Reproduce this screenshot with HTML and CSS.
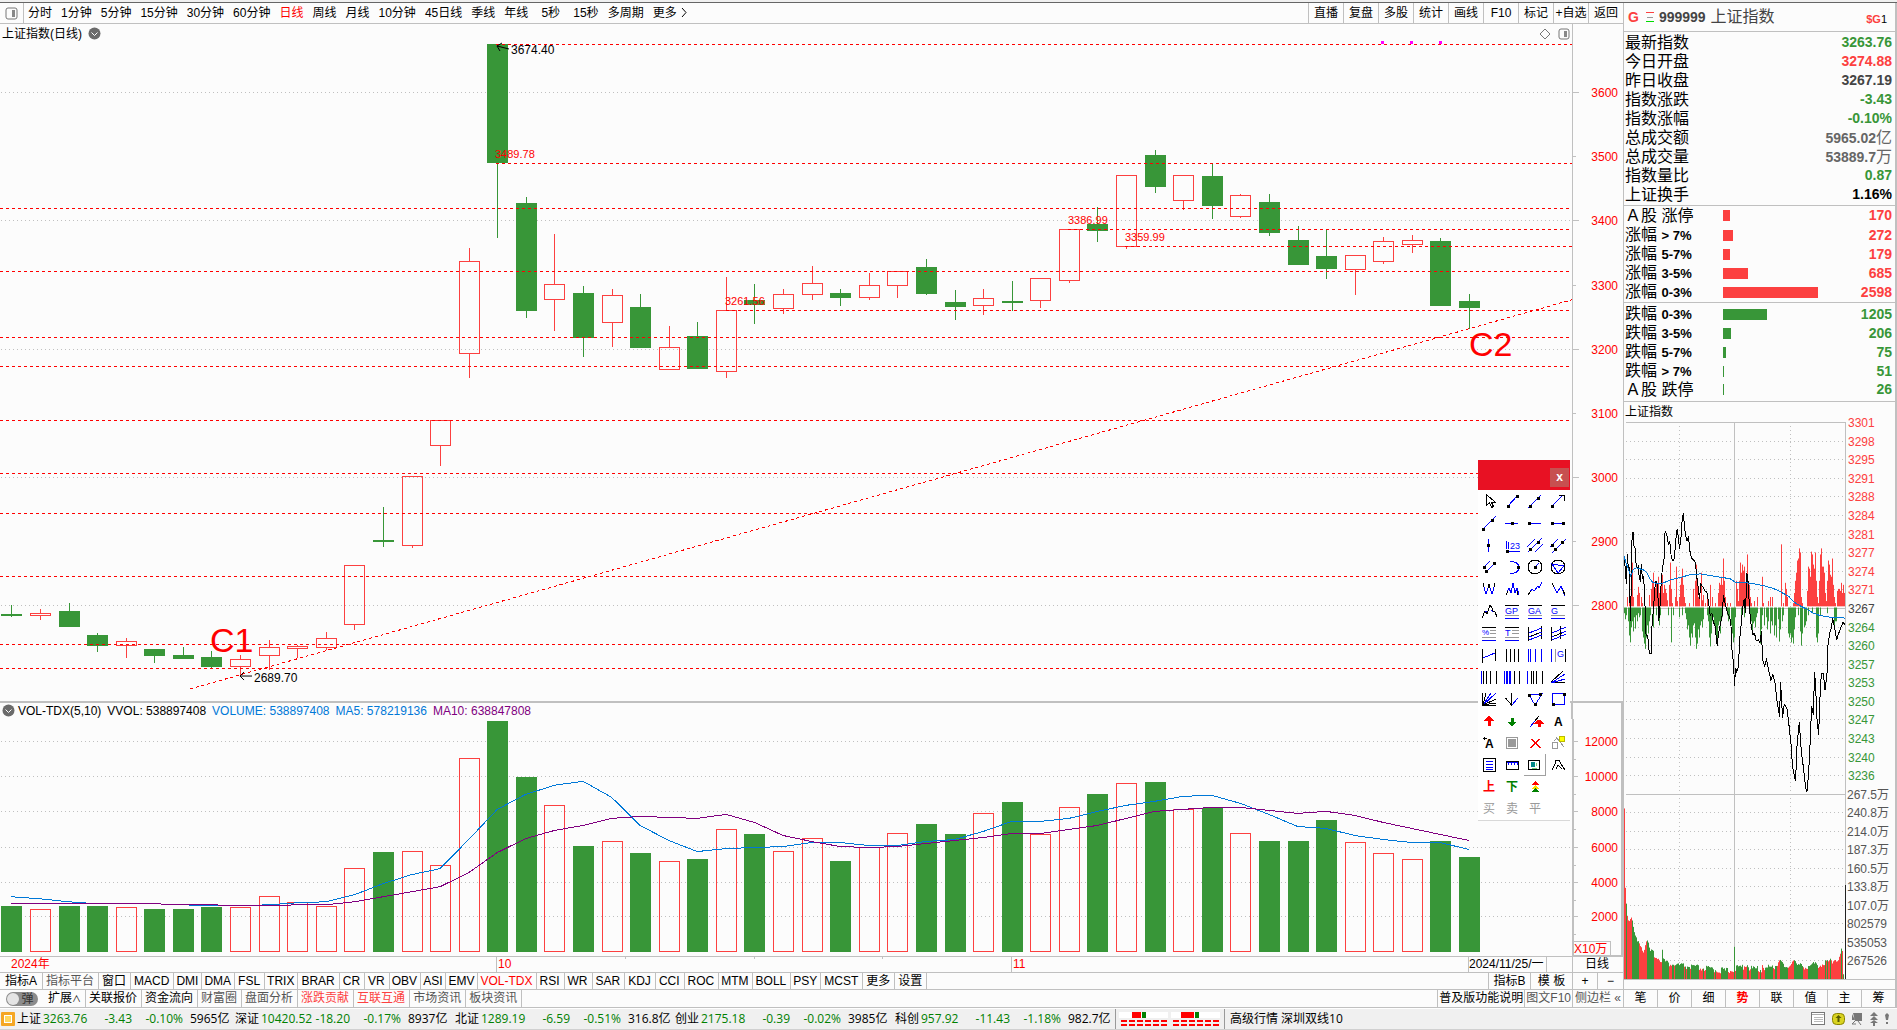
FILE: index.html
```html
<!DOCTYPE html>
<html lang="zh-CN">
<head>
<meta charset="utf-8">
<title>上证指数 日线</title>
<link rel="stylesheet" href="styles.css">
</head>
<body>
<div class="app">
  <div class="workspace">
    <main class="left">
      <nav class="toolbar">
        <button class="tool-icon" aria-label="侧栏"><svg width="13" height="13"><rect x="1" y="1" width="11" height="11" rx="2" fill="none" stroke="#777" stroke-width="1"/><rect x="7" y="3" width="3" height="7" fill="#888"/></svg></button>
        <div class="periods">
          <button>分时</button><button>1分钟</button><button>5分钟</button><button>15分钟</button><button>30分钟</button><button>60分钟</button><button class="active">日线</button><button>周线</button><button>月线</button><button>10分钟</button><button>45日线</button><button>季线</button><button>年线</button><button class="short">5秒</button><button>15秒</button><button>多周期</button><button>更多<svg class="more" width="6" height="11"><path d="M1 1l4 4.500l-4 4.500" fill="none" stroke="#000"/></svg></button>
        </div>
        <div class="actions">
          <button>直播</button><button>复盘</button><button>多股</button><button>统计</button><button>画线</button><button>F10</button><button>标记</button><button>+自选</button><button>返回</button>
        </div>
      </nav>

      <section class="pane price-pane">
        <header class="pane-head">
          <div class="pane-title">
            <span>上证指数(日线)</span>
            <svg class="chev" width="13" height="13"><circle cx="6.500" cy="6.500" r="6" fill="#6b6b6b"/><path d="M3.500 5.500l3 3l3-3" fill="none" stroke="#fff"/></svg>
            <span class="head-icons">
              <svg width="12" height="12"><path d="M6 1l5 5l-5 5l-5-5z" fill="none" stroke="#777"/></svg>
              <svg width="12" height="12"><rect x="1" y="1" width="10" height="10" rx="2" fill="none" stroke="#777" stroke-width="1"/><rect x="6" y="3" width="3" height="6" fill="#888"/></svg>
            </span>
          </div>
        </header>
        <svg id="price" class="plot"></svg>
      </section>

      <section class="pane volume-pane">
        <header class="pane-head">
          <div class="pane-title">
            <svg class="chev" width="13" height="13"><circle cx="6.500" cy="6.500" r="6" fill="#6b6b6b"/><path d="M3.500 5.500l3 3l3-3" fill="none" stroke="#fff"/></svg>
            <span>VOL-TDX(5,10)</span><span>VVOL: 538897408</span><span class="blue">VOLUME: 538897408</span><span class="blue">MA5: 578219136</span><span class="purple">MA10: 638847808</span>
          </div>
        </header>
        <svg id="volume" class="plot"></svg>
      </section>

      <nav class="bar indicators">
        <button class="wide">指标A</button><button class="muted">指标平台</button><button>窗口</button><button>MACD</button><button class="tight">DMI</button><button class="tight">DMA</button><button>FSL</button><button class="tight">TRIX</button><button>BRAR</button><button>CR</button><button>VR</button><button class="tight">OBV</button><button class="tight">ASI</button><button class="tight">EMV</button><button class="tight active">VOL-TDX</button><button>RSI</button><button>WR</button><button>SAR</button><button>KDJ</button><button>CCI</button><button>ROC</button><button class="tight">MTM</button><button>BOLL</button><button class="tight">PSY</button><button>MCST</button><button>更多</button><button>设置</button>
        <div class="bar-end"><button class="mid">指标B</button><button class="mid">模 板</button><button class="half">+</button><button class="half">−</button></div>
      </nav>
      <nav class="bar extras">
        <span class="switch-cell"><button class="switch"><i></i>弹</button></span>
        <button>扩展<small>∧</small></button><button>关联报价</button><button>资金流向</button><button class="muted">财富圈</button><button class="muted">盘面分析</button><button class="hot">涨跌贡献</button><button class="hot">互联互通</button><button class="muted">市场资讯</button><button class="muted last">板块资讯</button>
        <div class="bar-end"><button class="note">普及版功能说明</button><button class="note muted">图文F10</button><button class="side-toggle muted">侧边栏 «</button></div>
      </nav>

      <div class="palette" role="toolbar" aria-label="画线工具">
        <div class="palette-head"><button aria-label="关闭">x</button></div>
        <div class="palette-grid" id="tools"></div>
      </div>
    </main>

    <aside class="right">
      <header class="quote-head">
        <b class="red">G</b>
        <svg width="8" height="12"><path d="M0 1.500h8" stroke="#fc4040"/><path d="M1 6.500h6" stroke="#999"/><path d="M0 10.500h8" stroke="#0d0" stroke-width="1"/></svg>
        <b class="code">999999</b><span class="name">上证指数</span><span class="tag"><b>$G</b>1</span>
      </header>
      <dl class="quotes">
        <div><dt>最新指数</dt><dd class="green">3263.76</dd></div>
        <div><dt>今日开盘</dt><dd class="red">3274.88</dd></div>
        <div><dt>昨日收盘</dt><dd class="dark">3267.19</dd></div>
        <div><dt>指数涨跌</dt><dd class="green">-3.43</dd></div>
        <div><dt>指数涨幅</dt><dd class="green">-0.10%</dd></div>
        <div><dt>总成交额</dt><dd class="grey">5965.02<span>亿</span></dd></div>
        <div><dt>总成交量</dt><dd class="grey">53889.7<span>万</span></dd></div>
        <div><dt>指数量比</dt><dd class="green">0.87</dd></div>
        <div><dt>上证换手</dt><dd>1.16%</dd></div>
      </dl>
      <dl class="breadth up">
        <div><dt>Ａ股 涨停</dt><dd class="track"><i style="width:7px"></i></dd><dd>170</dd></div>
        <div><dt>涨幅 <b>&gt; 7%</b></dt><dd class="track"><i style="width:10px"></i></dd><dd>272</dd></div>
        <div><dt>涨幅 <b>5-7%</b></dt><dd class="track"><i style="width:7px"></i></dd><dd>179</dd></div>
        <div><dt>涨幅 <b>3-5%</b></dt><dd class="track"><i style="width:25px"></i></dd><dd>685</dd></div>
        <div><dt>涨幅 <b>0-3%</b></dt><dd class="track"><i style="width:95px"></i></dd><dd>2598</dd></div>
      </dl>
      <dl class="breadth down">
        <div><dt>跌幅 <b>0-3%</b></dt><dd class="track"><i style="width:44px"></i></dd><dd>1205</dd></div>
        <div><dt>跌幅 <b>3-5%</b></dt><dd class="track"><i style="width:8px"></i></dd><dd>206</dd></div>
        <div><dt>跌幅 <b>5-7%</b></dt><dd class="track"><i style="width:3px"></i></dd><dd>75</dd></div>
        <div><dt>跌幅 <b>&gt; 7%</b></dt><dd class="track"><i style="width:1px"></i></dd><dd>51</dd></div>
        <div><dt>Ａ股 跌停</dt><dd class="track"><i style="width:1px"></i></dd><dd>26</dd></div>
      </dl>
      <div class="mini-title">上证指数</div>
      <svg id="mini" class="plot"></svg>
      <nav class="mini-tabs">
        <button>笔</button><button>价</button><button>细</button><button class="active">势</button><button>联</button><button>值</button><button>主</button><button>筹</button>
      </nav>
    </aside>
  </div>

  <footer class="status">
    <svg class="logo" width="14" height="14"><rect x="0" y="0" width="14" height="14" rx="1" fill="#f5a623"/><rect x="3.500" y="3.500" width="7" height="7" fill="#ffd75e" stroke="#fff"/></svg>
    <div class="ticker"><span>上证</span><em>3263.76</em><em class="r">-3.43</em><em class="r">-0.10%</em><span class="amt">5965亿</span></div>
    <div class="ticker"><span>深证</span><em>10420.52</em><em class="r">-18.20</em><em class="r">-0.17%</em><span class="amt">8937亿</span></div>
    <div class="ticker"><span>北证</span><em>1289.19</em><em class="r">-6.59</em><em class="r">-0.51%</em><span class="amt">316.8亿</span></div>
    <div class="ticker"><span>创业</span><em>2175.18</em><em class="r">-0.39</em><em class="r">-0.02%</em><span class="amt">3985亿</span></div>
    <div class="ticker"><span>科创</span><em>957.92</em><em class="r">-11.43</em><em class="r">-1.18%</em><span class="amt">982.7亿</span></div>
    <div class="meter"><svg id="meter" width="104" height="16"></svg></div>
    <span class="feed">高级行情 深圳双线10</span>
    <span class="tray">
      <svg width="15" height="14"><rect x=".5" y=".5" width="13" height="12" fill="#fff" stroke="#777"/><path d="M1 2.500h12" stroke="#aaa"/><path d="M3 5.500h9M3 7.500h9M3 9.500h9" stroke="#bbb"/></svg>
      <svg width="13" height="14"><rect x=".5" y="1.500" width="12" height="11" rx="4" fill="#d9d320" stroke="#8a8400"/><path d="M6.500 3l3 3h-2v4h-2v-4h-2z" fill="#555a00"/></svg>
      <svg width="12" height="14"><path d="M2 1h9v8h-7zM1 2v6h3" fill="#777"/><path d="M4 9l-3 3h4M7 9l3 4" stroke="#777" fill="none"/></svg>
      <svg width="10" height="14"><path d="M5 0l4 4h-8zM5 4l4 4h-8zM5 8l4 3h-8zM4 11h2v3h-2z" fill="#777"/></svg>
      <svg width="4" height="14"><path d="M2 1l2 2l-1 5h-2l-1-5zM1 10h2v2h-2z" fill="#777"/></svg>
    </span>
  </footer>
</div>
<script src="script.js"></script>
</body>
</html>
```
FILE: styles.css
```css
* { box-sizing: border-box; }
body {
  margin: 0;
  background: #fcfcfc;
  color: #000;
  font: 12px/16px "Liberation Sans", "Noto Sans CJK SC", sans-serif;
}
button {
  margin: 0;
  padding: 0;
  border: 0;
  background: none;
  color: inherit;
  font: inherit;
  white-space: nowrap;
}
svg { display: block; flex: none; }
dl, dd { margin: 0; }
em, i { font-style: normal; }

.app {
  display: flex;
  flex-direction: column;
  height: 100vh;
  min-height: 760px;
  border-top: 2px solid #f0f0f0;
}
.workspace {
  flex: 1;
  min-height: 0;
  display: grid;
  grid-template-columns: minmax(0, 1fr) 274px;
  border-top: 1px solid #666;
}
.left {
  position: relative;
  display: flex;
  flex-direction: column;
  min-width: 0;
  min-height: 0;
}

/* Period toolbar */
.toolbar {
  display: flex;
  height: 21px;
  border-bottom: 1px solid #c0c0c0;
}
.tool-icon {
  display: flex;
  align-items: center;
  width: 24px;
  padding-left: 5px;
  border-right: 1px solid #c0c0c0;
}
.periods { display: flex; }
.periods button { padding: 0 5px 0 4px; }
.periods .short { min-width: 36px; }
.periods .active { color: #f00; }
.more { display: inline-block; margin-left: 4px; vertical-align: -1px; }
.actions { display: flex; margin-left: auto; }
.actions button { width: 35px; border-left: 1px solid #c0c0c0; }

/* Chart panes */
.pane { display: flex; flex-direction: column; min-height: 0; }
.price-pane { flex: 678 1 0; }
.volume-pane { flex: 270 1 0; border-top: 1px solid #c0c0c0; }
.pane-head { display: flex; height: 19px; padding-right: 50px; }
.pane-title {
  flex: 1;
  display: flex;
  align-items: center;
  gap: 6px;
  padding-left: 2px;
  border-right: 1px solid #c0c0c0;
}
.head-icons { display: flex; gap: 7px; margin-left: auto; padding-right: 2px; }
.volume-pane .pane-head { height: 17px; box-shadow: inset -2px 1px #c0c0c0; }
.volume-pane .pane-title { border-right: 2px solid #c0c0c0; }
.volume-pane .chev { margin-right: -3px; }
.plot { flex: 1; width: 100%; min-height: 0; overflow: visible; }
.blue { color: #0078d7; }
.purple { color: #800080; }

/* Tab rows below the charts */
.bar { display: flex; height: 17px; border-top: 1px solid #c0c0c0; }
.bar button { padding: 0 4px 0 3px; border-right: 1px solid #c0c0c0; line-height: 15px; }
.bar .tight { padding: 0 3px 0 2px; }
.bar .active { color: #f00; }
.bar .muted { color: #555; }
.bar .hot { color: #fc4040; }
.bar .wide { padding: 0 5px; }
.bar-end { display: flex; margin-left: auto; border-left: 1px solid #c0c0c0; }
.bar-end .mid { width: 42px; padding: 0; }
.bar-end .half { width: 25px; padding: 0; }
.bar-end .half:last-child, .bar-end .side-toggle { border-right: 0; }
.bar-end .note { padding: 0 1px; }
.bar-end .side-toggle { width: 50px; padding: 0; }
.extras { height: 19px; border-bottom: 1px solid #c0c0c0; }
.extras button { line-height: 17px; }
.extras small { font-size: 9px; }
.switch-cell { display: flex; align-items: center; width: 45px; padding-left: 6px; }
.extras .switch {
  position: relative;
  width: 32px;
  height: 14px;
  padding: 0 4px 0 15px;
  border: 0;
  border-radius: 7px;
  background: #8c8c8c;
  color: #333;
  line-height: 14px;
}
.switch i {
  position: absolute;
  left: 1px;
  top: 1px;
  width: 12px;
  height: 12px;
  border-radius: 6px;
  background: #e4e4e4;
}

/* Floating drawing tools */
.palette {
  position: absolute;
  right: 53px;
  top: 457px;
  width: 92px;
  background: #fff;
  border-bottom: 1px solid #d8d8d8;
}
.palette-head {
  display: flex;
  justify-content: flex-end;
  height: 30px;
  padding: 8px 1px 0 0;
  background: #e81123;
}
.palette-head button {
  width: 19px;
  height: 19px;
  background: #c75050;
  color: #fff;
  font-weight: bold;
  line-height: 17px;
}
.palette-grid { display: grid; grid-template-columns: repeat(4, 1fr); padding-right: 1px; }
.palette-grid svg { shape-rendering: crispEdges; }
.palette-grid button { display: flex; justify-content: center; align-items: center; height: 22px; }
.palette-grid .raised { border: solid #a0a0a0; border-width: 0 1px 1px 0; }

/* Quote panel */
.right {
  display: flex;
  flex-direction: column;
  min-height: 0;
  border-left: 1px solid #c0c0c0;
  border-right: 2px solid #c0c0c0;
}
.quote-head {
  display: flex;
  align-items: center;
  gap: 5px;
  height: 29px;
  padding: 0 8px 0 4px;
  border-bottom: 1px solid #c0c0c0;
  font-size: 14px;
  line-height: 20px;
}
.quote-head svg { margin-left: 2px; }
.quote-head .code { color: #444; }
.quote-head .name { color: #444; font-size: 16px; }
.quote-head .tag { margin-left: auto; padding-top: 3px; font-size: 11px; }
.tag b { color: #fc4040; }
.red { color: #fc4040; }
.green { color: #389638; }
.dark { color: #444; }
.grey { color: #666; }
.quotes, .breadth { padding: 1px 3px 1px 1px; border-bottom: 1px solid #c0c0c0; }
.quotes div { display: flex; justify-content: space-between; }
.quotes div, .breadth div { height: 19px; line-height: 19px; }
.quotes dt, .breadth dt { font-size: 16px; white-space: nowrap; }
.quotes dd { font-size: 14px; font-weight: bold; }
.quotes dd span { font-size: 16px; font-weight: normal; }
.breadth.up { padding-top: 0; }
.breadth.down { padding-bottom: 2px; }
.breadth div { display: grid; grid-template-columns: 98px 1fr auto; align-items: center; }
.breadth dt b { font-size: 13px; }
.breadth dd { font-size: 14px; font-weight: bold; }
.track i { display: block; height: 11px; background: currentColor; }
.up dd { color: #fc4040; }
.down dd { color: #389638; }
.mini-title { height: 20px; padding: 2px 0 0 1px; }
.mini-tabs { display: flex; height: 19px; border: solid #c0c0c0; border-width: 1px 0; }
.mini-tabs button { flex: 1; border-left: 1px solid #c0c0c0; line-height: 17px; }
.mini-tabs button:first-child { border-left: 0; }
.mini-tabs .active { color: #f00; font-weight: bold; }

/* Status line */
.status {
  display: flex;
  align-items: center;
  height: 22px;
  padding: 0 8px 0 1px;
  background: #f0f0f0;
  border-top: 1px solid #fff;
  border-bottom: 1px solid #d0d0d0;
  font-family: "Open Sans", "Noto Sans CJK SC", sans-serif;
  white-space: nowrap;
}
.ticker { display: grid; grid-template-columns: 26px 50px 39px 51px 54px; }
.ticker:first-of-type { margin-left: 2px; grid-template-columns: 26px 50px 39px 51px 52px; }
.ticker em { color: #008000; }
.ticker .r { text-align: right; }
.ticker .amt { padding-left: 7px; }
.meter { padding: 2px; border: solid #999; border-width: 0 1px; }
.feed { padding-left: 5px; }
.tray { display: flex; gap: 6px; margin-left: auto; }
```
FILE: script.js
```js
const NS = 'http://www.w3.org/2000/svg';
const RED = '#fc4040', GREEN = '#389638', GRID = '#c0c0c0', SIGNAL = '#f00';

function el(parent, name, attrs, text) {
  const n = document.createElementNS(NS, name);
  for (const k in attrs) n.setAttribute(k, attrs[k]);
  if (text !== undefined) n.textContent = text;
  parent.appendChild(n);
  return n;
}
const crisp = v => Math.round(v) + 0.5;
function line(s, x1, y1, x2, y2, stroke, dash, width) {
  el(s, 'line', { x1, y1, x2, y2, stroke, 'stroke-dasharray': dash || 'none', 'stroke-width': width || 1, 'shape-rendering': 'crispEdges' });
}
function rect(s, x, y, w, h, fill, stroke) {
  el(s, 'rect', { x, y, width: w, height: h, fill, stroke: stroke || 'none' });
}
function text(s, x, y, t, fill, size, anchor) {
  el(s, 'text', { x, y, fill, 'font-size': size || 12, 'text-anchor': anchor || 'start' }, t);
}
function curve(s, points, stroke) {
  el(s, 'polyline', { points: points.map(q => q.join(',')).join(' '), fill: 'none', stroke, 'shape-rendering': 'crispEdges' });
}

// high, body top, body bottom, low, volume top, rising
const days = [
  [606,615,617,618,906,0],[610,614,617,621,909,1],[604,612,628,628,906,0],[634,636,647,653,906,0],
  [639,642,647,659,907,1],[650,650,657,664,909,0],[648,656,660,660,909,0],[652,658,668,669,907,0],
  [656,660,668,677,907,1],[641,648,657,671,896,1],[646,647,650,659,902,1],[633,639,649,651,906,1],
  [566,566,626,631,868,1],[508,541,543,548,852,0],[477,477,547,549,851,1],[421,421,447,467,865,1],
  [248,261,354,379,759,1],[44,44,163,238,722,0],[197,203,311,318,778,0],[234,284,300,331,806,1],
  [286,293,338,357,846,0],[289,295,323,347,841,1],[294,307,348,348,853,0],[326,347,370,370,861,1],
  [322,336,369,369,859,0],[277,310,372,379,830,1],[284,300,305,324,835,0],[289,294,309,314,851,1],
  [266,283,295,300,838,1],[289,293,298,306,861,0],[273,285,298,300,847,1],[271,271,286,298,834,1],
  [259,267,294,295,825,0],[290,302,307,320,835,0],[289,298,306,315,814,1],[281,301,303,311,803,0],
  [278,278,301,308,835,1],[229,229,281,283,808,1],[207,224,231,242,795,0],[175,175,247,249,784,1],
  [150,155,187,193,783,0],[175,175,201,210,810,1],[163,176,206,219,809,0],[194,195,217,218,834,1],
  [194,202,233,236,841,0],[226,240,265,265,841,0],[229,256,269,279,821,0],[255,255,270,295,842,1],
  [237,241,262,264,853,1],[235,240,245,253,859,1],[238,241,306,306,841,0],[294,301,308,329,857,0]
];
const ma5 = [897,899,902,904,904,904,905,906,906,905,903,902,895,884,875,869,840,810,795,786,782,798,826,841,852,849,848,847,843,843,846,846,842,840,832,822,822,819,812,806,802,797,796,804,815,827,829,836,840,843,843,850];
const ma10 = [904,904,904,904,904,904,905,905,906,906,905,905,902,897,892,887,873,853,839,831,826,819,817,818,819,815,823,836,842,847,848,847,844,841,838,834,834,830,826,819,812,810,808,808,811,814,812,816,823,829,835,841];
const dayX = i => 11.4 + 28.58 * i;

function fit(svg, w, top, h) {
  svg.replaceChildren();
  const W = svg.clientWidth, H = svg.clientHeight;
  return { W, H, x: v => v / w * W, y: v => (v - top) / h * H };
}

function drawPrice() {
  const s = document.getElementById('price');
  const { W, H, x, y } = fit(s, 1623, 43, 659);
  const edge = W - 50.5;
  [[3600,92],[3500,156],[3400,220],[3300,285],[3200,349],[3100,414],[3000,478],[2900,542],[2800,606]].forEach(([p, v], i) => {
    const py = crisp(y(v));
    if (i % 2 === 0) line(s, 1, py, edge, py, GRID, '1 3');
    line(s, edge, py, edge + (i % 2 ? 3 : 6), py, GRID);
    text(s, W - 5, py + 4, p, SIGNAL, 12, 'end');
  });
  days.forEach((d, i) => {
    const c = Math.round(x(dayX(i))), [hi, t, b, lo] = d.map(v => Math.round(y(v)));
    const col = d[5] ? RED : GREEN, h = b - t;
    line(s, c + .5, hi, c + .5, t, col);
    line(s, c + .5, b, c + .5, lo, col);
    if (d[5]) rect(s, c - 9.5, t + .5, 20, h - 1, 'none', col);
    else rect(s, c - 10, t, 21, h, col);
  });
  [[44,496],[163,496],[208,0],[229,1068],[246,1125],[271,0],[310,726],[337,0],[366,0],[421,0],[474,0],[514,0],[577,0],[645,0],[669,0]]
    .forEach(([v, from]) => line(s, Math.round(x(from)), crisp(y(v)), edge, crisp(y(v)), SIGNAL, '3 3'));
  line(s, x(190), y(690), edge, y(300), SIGNAL, '3 3');
  line(s, edge, 0, edge, H, GRID);
  [1382, 1411, 1440].forEach(v => rect(s, Math.round(x(v)) - 1, y(41), 3, 3, '#f0f'));
  text(s, x(511), y(54), '3674.40', '#000');
  text(s, x(254), y(683), '2689.70', '#000');
  el(s, 'path', { d: `M${x(497)} ${y(46)}l12 3m-12-3l5-3m-5 3l3 5M${x(240)} ${y(677)}h12m-12 0l4-4m-4 4l4 4`, stroke: '#000', fill: 'none' });
  [[495,158,'3489.78'],[725,305,'3261.56'],[1068,224,'3386.99'],[1125,241,'3359.99']].forEach(a => text(s, x(a[0]), y(a[1]), a[2], SIGNAL, 11));
  text(s, x(210), y(653), 'C1', SIGNAL, 34);
  text(s, x(1469), y(356), 'C2', SIGNAL, 34);
}

function drawVolume() {
  const s = document.getElementById('volume');
  const { W, H, x } = fit(s, 1623, 720, 252);
  const edge = W - 50, base = H - 16, by = v => (v - 720) / 236 * base;
  [742,777,812,847,882,916].forEach((v, i) => {
    const py = crisp(by(v));
    line(s, 1, py, edge, py, GRID, '1 3');
    line(s, edge, py, edge + 5, py, GRID);
    line(s, edge, py + 18, edge + 3, py + 18, GRID);
    text(s, W - 5, py + 4, 12000 - i * 2000, SIGNAL, 12, 'end');
  });
  const bottom = Math.round(by(952));
  days.forEach((d, i) => {
    const c = Math.round(x(dayX(i))), t = Math.round(by(d[4]));
    if (d[5]) rect(s, c - 9.5, t + .5, 20, bottom - t - 1, 'none', RED);
    else rect(s, c - 10, t, 21, bottom - t, GREEN);
  });
  [[ma5, '#0078d7'], [ma10, '#800080']].forEach(([m, stroke]) => curve(s, m.map((v, i) => [x(dayX(i)), by(v)]), stroke));
  line(s, 0, base + .5, W, base + .5, GRID);
  line(s, edge, 0, edge, base, GRID, '', 2);
  line(s, W - 1, 0, W - 1, base, GRID, '', 2);
  line(s, edge, base, W, base, GRID, '', 2);
  rect(s, edge + .5, base - 14.5, 37, 14, 'none', GRID);
  text(s, edge + 1, base - 3, 'X10万', SIGNAL);
  // date axis
  [[496,'10'],[1011,'11']].forEach(([v, t]) => { line(s, crisp(x(v)), base, crisp(x(v)), H, GRID); text(s, x(v) + 2, H - 4, t, SIGNAL); });
  [625, 754, 882].forEach(v => line(s, crisp(x(v)), base, crisp(x(v)), base + 3, GRID));
  text(s, 11, H - 4, '2024年', SIGNAL);
  [1468, 1546].forEach(v => line(s, crisp(x(v)), base, crisp(x(v)), H, GRID));
  line(s, edge - .5, base, edge - .5, H, GRID);
  text(s, x(1469), H - 4, '2024/11/25/一', '#000');
  text(s, W - 26, H - 4, '日线', '#000', 12, 'middle');
}

const ticks = [72,400,76,430,79,468,82,395,85,430,88,425,91,560,93,500,96,360,99,340,102,375,105,380,107,412,112,430,115,425,118,455,121,460,124,418,127,455,130,448,134,490,137,590,141,595,144,605,148,640,153,640,156,570,159,540,163,500,166,462,170,462,173,480,176,560,180,520,184,455,187,430,192,405,195,338,200,345,205,370,209,362,214,405,219,410,223,405,227,360,231,333,235,352,238,382,243,350,247,300,250,295,253,325,257,350,261,362,265,350,270,390,275,405,280,408,286,415,290,450,295,480,298,505,302,468,308,475,314,485,320,488,325,510,330,545,335,540,340,562,345,572,351,620,355,590,360,570,366,545,370,495,376,520,382,540,388,548,392,562,396,640,400,660,403,720,406,675,410,685,415,672,418,610,422,575,427,530,432,505,436,540,440,440,444,465,448,530,453,570,458,592,463,590,468,608,474,606,479,612,484,585,487,655,493,670,499,655,505,680,512,705,518,692,524,710,530,755,538,795,541,710,547,798,552,765,560,775,566,815,572,860,577,920,582,940,586,955,590,870,597,808,603,880,610,925,616,970,620,980,625,935,629,870,634,770,639,790,643,685,646,720,650,800,655,840,659,750,663,690,669,688,674,730,680,690,683,620,688,590,692,580,697,553,702,572,709,605,715,590,722,575,728,562,733,568];
const average = [72,400,80,420,92,448,100,432,110,428,130,433,140,440,150,456,160,465,185,467,210,458,240,452,270,445,300,443,330,447,360,451,390,455,405,463,430,464,460,467,490,472,520,479,540,487,565,498,580,512,600,522,620,530,640,540,660,546,690,550,733,552];
const inflow = [82,500,88,460,94,430,97,415,100,500,112,495,115,475,118,490,122,500,127,515,148,495,152,480,155,465,158,440,161,485,164,478,167,462,170,470,173,450,176,490,179,480,182,470,185,445,188,490,191,470,194,480,197,490,200,508,208,470,211,415,214,480,217,515,226,500,229,425,232,510,238,500,241,470,244,450,247,430,250,470,253,500,256,515,268,515,280,480,284,460,288,420,291,465,294,500,298,490,302,440,306,508,310,495,314,515,320,500,330,470,336,500,345,515,355,490,358,465,361,470,364,450,367,470,370,405,373,460,376,500,380,515,390,515,406,460,409,480,412,510,415,460,418,415,421,440,424,420,427,435,430,425,433,465,436,450,439,395,442,480,445,470,448,500,451,515,460,510,470,500,484,450,487,515,502,510,508,500,514,500,541,370,548,515,554,465,557,480,560,500,578,515,581,490,584,460,587,440,590,410,593,405,596,380,599,390,602,500,605,515,619,485,622,425,625,430,628,450,631,388,634,395,637,420,640,430,643,390,646,460,649,500,652,515,655,460,658,395,661,380,664,425,667,425,670,440,673,490,676,510,680,460,683,410,686,420,689,445,692,450,695,405,698,470,701,500,704,515,710,485,713,480,716,480,719,485,722,465,725,490,728,470,731,490];
const outflow = [73,540,76,555,79,545,85,560,88,595,91,612,94,575,97,560,100,585,103,550,106,578,109,545,112,560,115,540,118,550,121,545,127,585,130,600,133,615,136,628,139,600,142,570,145,590,148,560,151,545,160,575,168,545,176,570,180,545,204,545,214,612,220,545,238,550,245,545,256,540,259,555,262,580,265,570,268,600,271,620,274,590,277,600,280,570,283,565,286,600,289,628,292,615,295,580,298,600,301,570,304,560,307,575,310,555,320,545,324,560,327,600,330,622,333,590,336,560,339,550,342,565,345,580,348,600,351,610,354,570,357,560,360,590,363,560,366,550,380,545,384,560,388,555,392,570,395,590,398,612,401,600,404,550,422,545,430,550,448,545,451,560,454,590,457,565,460,560,463,575,466,550,470,540,478,615,481,580,484,545,492,570,496,550,500,580,504,560,508,590,512,560,516,570,520,595,524,570,528,600,532,555,536,610,540,580,544,560,548,545,562,590,566,600,569,590,572,612,575,600,578,615,581,580,584,550,592,545,598,585,602,620,606,590,610,575,614,570,618,560,622,545,634,540,646,600,650,612,654,590,660,545,680,540,700,570,704,560,708,560];
const turnover = [73,1022,76,1218,79,1257,83,1297,88,1300,94,1290,100,1318,110,1350,120,1352,130,1375,139,1345,145,1360,150,1378,160,1378,170,1390,184,1394,187,1375,190,1394,200,1404,240,1410,300,1416,380,1423,401,1418,403,1362,406,1418,430,1412,440,1404,446,1416,484,1420,487,1402,491,1418,530,1410,538,1390,545,1405,560,1422,570,1405,580,1392,592,1410,620,1412,640,1408,660,1408,680,1402,700,1396,715,1392,724,1375,727,1375,728,1436,733,1437];
const pairs = a => a.reduce((r, v, i) => (i % 2 ? r[r.length - 1].push(v) : r.push([v]), r), []);

function drawMini() {
  const s = document.getElementById('mini');
  s.replaceChildren();
  const W = s.clientWidth, H = s.clientHeight, w = W - 50, h = H - 10;
  const x = v => (v - 72) / 662 * w, y = v => (v - 68) / 1375 * h;
  const prices = [3301,3298,3295,3291,3288,3284,3281,3277,3274,3271,3267,3264,3260,3257,3253,3250,3247,3243,3240,3236];
  prices.forEach((p, i) => {
    const v = 68 + i * 45.9, py = crisp(y(v));
    line(s, 2, py, w, py, GRID, i && i !== 10 ? '1 3' : '');
    text(s, w + 3, py + 4, p, i < 10 ? RED : i === 10 ? '#444' : GREEN);
  });
  ['267.5万','240.8万','214.0万','187.3万','160.5万','133.8万','107.0万','802579','535053','267526'].forEach((t, i) => {
    const py = crisp(y(986 + i * 45.7));
    line(s, 2, py, w, py, GRID, i ? '1 3' : '');
    text(s, w + 2, py + 4, t, '#555');
  });
  [238, 568].forEach(v => line(s, crisp(x(v)), 0, crisp(x(v)), h, GRID, '1 3'));
  line(s, crisp(x(401)), 0, crisp(x(401)), h, GRID);
  pairs(inflow).forEach(([a, b]) => rect(s, Math.round(x(a)), y(b), 1, y(523) - y(b), RED));
  pairs(outflow).forEach(([a, b]) => rect(s, Math.round(x(a)), y(526), 1, y(b) - y(526), GREEN));
  const env = pairs(turnover);
  for (let px = 0, k = 0; px < w - 1; px++) {
    const v = 73 + px * 3;
    while (k < env.length - 2 && env[k + 1][0] <= v) k++;
    const [x0, y0] = env[k], [x1, y1] = env[k + 1];
    const r = (Math.sin(px * 12.9898) * 43758.5453) % 1;
    const top = y0 + (y1 - y0) * Math.min(1, Math.max(0, (v - x0) / (x1 - x0))) + (px > 6 ? r * 8 : 0);
    const up = px === 0 || (v > 670 ? r > -.5 : r > .15) && px !== 110;
    rect(s, px, y(top), 1, h - y(top), up ? RED : GREEN);
  }
  curve(s, pairs(ticks).map(([a, b]) => [x(a), y(b)]), '#000');
  curve(s, pairs(average).map(([a, b]) => [x(a), y(b)]), '#0078d7');
  line(s, w + .5, 0, w + .5, h, GRID);
  line(s, w + .5, y(1210), w + .5, h, '#222');
  line(s, 0, h + .5, W, h + .5, GRID);
}

// Drawing tools, each on an 18 px square centred on 0,0
const B = '#00f', K = '#000', Y = '#999';
const p = (d, c, f) => `<path d="${d}" stroke="${c || K}" fill="${f || 'none'}"/>`;
const dots = (...a) => pairs(a).map(([x, y]) => `<rect x="${x - 1}" y="${y - 1}" width="3" height="3" fill="#000"/>`).join('');
const t = (s, x, y, c, z, b) => `<text x="${x}" y="${y}" fill="${c}" font-size="${z}"${b ? ' font-weight="bold"' : ''}>${s}</text>`;
const rows3 = p('M-7 -5.500h14', K) + p('M-7 4.500h14', Y) + p('M-7 7.500h14', B);
const icons = [
  ['选择', p('M-2.500 -6.500v11l3-3l2 5l2-1l-2-4h4z', K, '#fff')],
  ['线段', p('M-4 5l9-10', B) + dots(-4, 5, 5, -5)],
  ['直线', p('M-7 7l13-13', B) + dots(-5, 5, 3, -3)],
  ['箭头', p('M-6 5l11-11', B) + p('M1 -5.500h5v5', K) + dots(-6, 5)],
  ['射线', p('M-6 6l13-13', B) + dots(-6, 6, 3, -3)],
  ['水平线', p('M-7 .5h13', B) + dots(0, 0)],
  ['水平射线', p('M-6 .5h12', B) + dots(-6, 0)],
  ['水平线段', p('M-5 .5h10', B) + dots(-6, 0, 5, 0)],
  ['垂直线', p('M-.5 -6v13', B) + dots(-1, 0)],
  ['标价', t('23', -2, 4, B, 9) + p('M-5.500 -4v8M-3.500 -3v7', B) + p('M-4 6.500h12', B) + dots(-5, 6)],
  ['平行线', p('M-8 2l8-8M-7 7l14-14M0 7l8-8', B) + dots(-5, 4, 3, -3)],
  ['双平行线', p('M-8 2l8-8M-6 8l14-14', B) + dots(-6, 0, -3, 4, 4, -3)],
  ['平行线段', p('M-5 0l6-6M-3 5l10-10', B) + dots(-5, 0, -3, 4, 5, -4)],
  ['圆弧', p('M-1 -5.500c4 0 8 2 8 6s-4 6-8 6', B) + p('M-2 -5.500h3M-2 6.500h3', B) + dots(6, 0)],
  ['圆', '<circle r="7" fill="none" stroke="#000"/>' + p('M0 0l4-4', B) + dots(0, 0)],
  ['外接圆', '<circle r="7" fill="none" stroke="#000"/>' + p('M-6 -3l12 2l-6 7z', B)],
  ['波浪', p('M-6 -5l3 10l3-9l3 9l3-10', B) + p('M-6 -6l1 4M6 -6l-1 4M-1 -1l1-4l1 4', K)],
  ['头肩', p('M-6 6l3-7l2 5l2-10l2 10l2-5l2 7', B) + p('M-6 6l2-4M6 6l-1-4', K)],
  ['上升浪', p('M-7 6l4-6l2 2l4-5l1 2l3-6', B) + p('M-7 6l3-4', K)],
  ['折线', p('M-6 -6l5 10l4-7l4 10', B) + p('M-6 -6l2 4M5 1l2 5', K)],
  ['八浪', p('M-7 7l3-7l2 3l3-9l2 3l1 3l2 1l2 5', K) + p('M-4 1l2-1M2 -1l2 2', B)],
  ['周期', rows3 + t('GP', -7, 3, B, 9)],
  ['黄金目标', rows3 + t('GA', -7, 3, B, 9)],
  ['黄金分割', rows3 + t('G', -7, 3, B, 9)],
  ['百分比', p('M-7 -5.500h14', K) + p('M1 -2.500h6M1 .5h6M-7 4.500h14', Y) + p('M-7 7.500h14', B) + t('%', -7, 2, B, 8)],
  ['波段线', p('M-7 -5.500h14', K) + p('M0 -2.500h7M0 .5h7M-7 4.500h14', Y) + p('M-7 7.500h14', B) + t('T', -7, 3, B, 9)],
  ['通道', p('M-6.500 -6v14M6.500 -7v13', K) + p('M-6 0l13-5M-6 4l13-5M-6 7l13-5', B) + p('M-4 3l8-3', K)],
  ['通道线', p('M-6.500 -6v14M2.500 -7v13', K) + p('M-6 0l14-6M-6 4l14-6M-6 7l14-6', B) + p('M-4 3l8-3', K)],
  ['回归线', p('M-6.500 -6v14M6.500 -6v12', K) + p('M-6 3l12-5', B)],
  ['周期线', p('M-5.500 -6v13M-1.500 -6v13M2.500 -6v13M6.500 -6v13', K)],
  ['费波纳契', p('M-6.500 -6v13M-4.500 -6v13M.5 -6v13M6.500 -6v13', B)],
  ['江恩周期', p('M-6.500 -6v13', B) + p('M-2.500 -6v13', Y) + p('M7.500 -6v13', K) + t('G', -1, 2, B, 9)],
  ['阳历周期', p('M-7.500 -6v13', B) + p('M-5.500 -6v13M-2.500 -6v13M1.500 -6v13M7.500 -6v13', K)],
  ['阴历周期', p('M-7.500 -6v13M-5.500 -6v13M-4.500 -6v13M-2.500 -6v13M-1.500 -6v13', B) + p('M2.500 -6v13M7.500 -6v13', K)],
  ['螺旋线', p('M-7.500 -6v13', B) + p('M-3.500 -6v13M-1.500 -6v13M1.500 -6v13M7.500 -6v13', K)],
  ['阻速线', p('M-7 5l12-11M-7 6l14-1', K) + p('M-7 6l14-9M-7 6l14-4', B)],
  ['江恩角度', p('M-6.500 -6v12.500h13', K) + p('M-6 6l13-12M-6 6l8-12', B) + p('M-6 6l3-12M-6 6l13-6M-6 6l13-2', K)],
  ['三角扇', p('M-.5 -6v12l-6-7', K) + p('M0 6l6-7', B)],
  ['三角形', p('M-6 -4l13-1l-7 11z', B) + dots(-6, -4, 5, -5, 0, 5)],
  ['矩形', p('M-5.500 -5.500h12v11h-12z', B) + dots(-5, 5, 6, -5)],
  ['上涨标记', p('M0 -5l4 4h-3v5h-2v-5h-3z', '#f00', '#f00')],
  ['下跌标记', p('M0 5l4-4h-3v-4h-2v4h-3z', '#008000', '#008000')],
  ['趋势标记', p('M-5 6l9-11', K) + p('M-5 6l5-6', B) + p('M4 -1l4 3h-3v3h-2v-3h-3z', '#f00', '#f00')],
  ['文字', t('A', -4, 5, K, 12, 1)],
  ['注解', t('A', -4, 5, K, 12, 1) + p('M-6 -4.500h4M-4.500 -6v3', K)],
  ['填充', p('M-5.500 -5.500h11v11h-11z', Y) + '<rect x="-4" y="-4" width="8" height="8" fill="#999"/>'],
  ['删除', p('M-4 -4l9 9M5 -4l-9 9M-3 -4l9 9M4 -4l-9 9', '#f00')],
  ['隐藏', p('M-5.500 -.5h5v6h-5zM-2 -6l8 10M-4 -2l3-3', Y) + '<circle cx="4" cy="-4" r="3" fill="#ff0" stroke="#bb0"/>'],
  ['管理', p('M-5.500 -6.500h12v13h-12z', K, '#fff') + p('M-3 -3.500h7M-3 -.5h7M-3 2.500h7M-3 4.500h7', B)],
  ['尺', p('M-5.500 -3.500h12v8h-12z', K) + p('M-5 -2.500h11M-3.500 -3v3M-.5 -3v3M2.500 -3v3M5.500 -3v3', B)],
  ['截图', p('M-5.500 -4.500h11v9h-11z', K, '#fff') + '<rect x="-3" y="-3" width="4" height="5" fill="#088"/><path d="M2.500 -2v3M-2.500 3.500h5" stroke="#7c7"/>', 'raised'],
  ['拱形', p('M-6 5l3-6l1-4h3l2 4l4 6M-2 4l2-4l4 4', K)],
  ['上', t('上', -6, 4, '#f00', 12, 1)],
  ['下', t('下', -6, 4, '#008000', 12, 1)],
  ['涨跌', '<path d="M0 -6l4 4h-8z" fill="#f00"/><path d="M0 -2l4 4h-8z" fill="#fd0"/><path d="M0 1l4 4h-8z" fill="#008000"/>'],
  null,
  ['买', t('买', -6, 4, Y, 12)],
  ['卖', t('卖', -6, 4, Y, 12)],
  ['平', t('平', -6, 4, Y, 12)]
];
document.getElementById('tools').innerHTML = icons.map(i => i
  ? `<button aria-label="${i[0]}" class="${i[2] || ''}"><svg width="18" height="18" viewBox="-9 -9 18 18">${i[1]}</svg></button>`
  : '<span></span>').join('');

const meter = document.getElementById('meter');
[0, 52].forEach((x, i) => {
  rect(meter, x + 1, 1, 49, 6, '#fff');
  rect(meter, x + (i ? 11 : 14), 1, i ? 13 : 9, 6, '#f00');
  rect(meter, x + (i ? 25 : 24), 1, 4, 6, '#008000');
  for (let k = 0; k < 6; k++) for (const y of [9, 13]) rect(meter, x + 3 + k * 8, y, 6, 2, '#f00');
});

function drawAll() { drawPrice(); drawVolume(); drawMini(); }
drawAll();
window.addEventListener('resize', drawAll);
```
